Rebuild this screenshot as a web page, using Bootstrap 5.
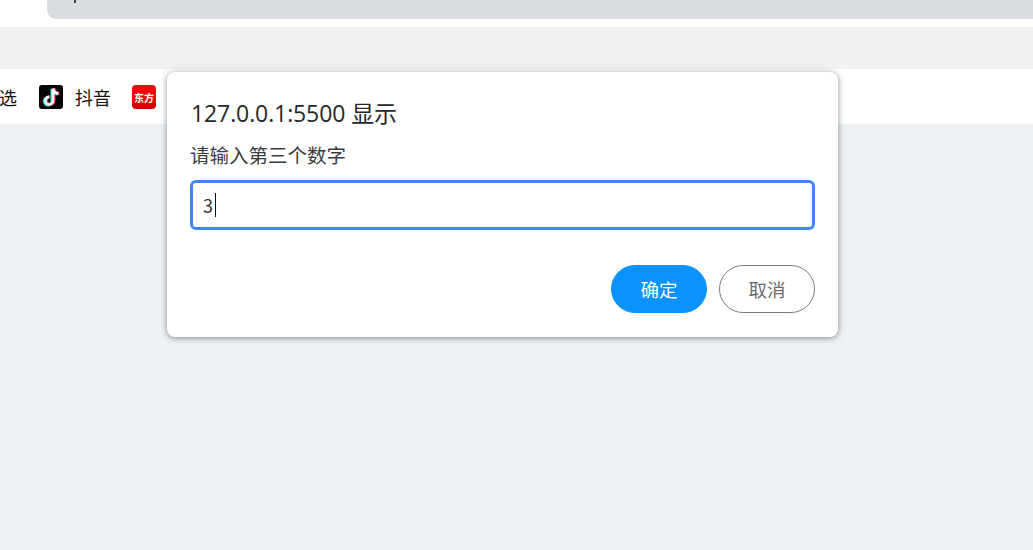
<!DOCTYPE html>
<html lang="zh">
<head>
<meta charset="utf-8">
<title>prompt</title>
<link href="https://cdn.jsdelivr.net/npm/bootstrap@5.3.0/dist/css/bootstrap.min.css" rel="stylesheet">
<style>
html,body{height:100%;}
body{background:#eff2f5;font-family:"Noto Sans CJK SC","Noto Sans",sans-serif;overflow:hidden;position:relative;}
.top-strip{height:27px;background:#fff;padding-left:47px;}
.addr-bar{height:19px;background:#d9dce1;border-bottom-left-radius:9px;padding-left:27px;}
.addr-caret{width:2px;height:3px;background:#444;}
.tool-strip{height:42px;background:#f0f1f3;}
.fav-strip{height:55px;background:#fff;color:#111;font-size:18px;overflow:hidden;padding-top:1px;}
.fav-cut{margin-left:-1px;width:20px;}
.fav-ico{width:24px;height:24px;margin-left:20px;margin-right:12px;}
.fav-label{line-height:24px;}
.ico-east{width:24px;height:24px;margin-left:21px;font-size:10px;font-weight:700;color:#fff;background:linear-gradient(#ee0a0a 55%,#c80000);border-radius:4px;letter-spacing:0;}
.dlg{position:absolute;left:167px;top:72px;width:671px;height:265px;background:#fff;border-radius:8px;box-shadow:0 1px 6px rgba(40,50,60,.55);padding:24px 23px;}
.dlg-title{font-size:23px;line-height:34px;color:#24272b;margin:0;font-weight:400;font-family:"Open Sans","Noto Sans CJK SC",sans-serif;letter-spacing:-.1px;padding-left:1px;}
.dlg-msg{font-size:19.5px;line-height:26px;color:#3a3d40;margin:12px 0 12px;}
.dlg-input{height:50px;border:3px solid #4285f4;border-radius:6px;padding:0 10px;font-size:18px;color:#333;line-height:44px;background:#fff;}
.dlg-caret{width:1px;height:24px;background:#111;margin-left:2px;}
.dlg-actions{margin-top:35px;gap:12px;}
.dlg-btn{width:96px;height:48px;font-size:18.5px;padding:0;line-height:46px;}
.dlg-ok{background:#0a93ff;border:1px solid #0a93ff;color:#fff;}
.dlg-cancel{background:#fff;border:1px solid #7d7d7d;color:#6a6a6a;}
</style>
</head>
<body>
<div class="top-strip"><div class="addr-bar"><div class="addr-caret"></div></div></div>
<div class="tool-strip"></div>
<div class="fav-strip d-flex align-items-center">
  <span class="fav-cut fav-label">选</span>
  <svg class="fav-ico flex-shrink-0" viewBox="0 0 24 24" aria-hidden="true">
    <rect width="24" height="24" rx="3" fill="#050505"/>
    <path d="M14 3.500v12.200a3.800 3.800 0 1 1-3.800-3.800M14 3.500c.4 3 2.300 4.800 5.300 5.100" fill="none" stroke="#25f4ee" stroke-width="3" transform="translate(-1 .5)"/>
    <path d="M14 3.500v12.200a3.800 3.800 0 1 1-3.800-3.800M14 3.500c.4 3 2.300 4.800 5.300 5.100" fill="none" stroke="#fe2c55" stroke-width="3" transform="translate(1 -.2)"/>
    <path d="M14 3.500v12.200a3.800 3.800 0 1 1-3.800-3.800M14 3.500c.4 3 2.300 4.800 5.300 5.100" fill="none" stroke="#fff" stroke-width="2.600"/>
  </svg>
  <span class="fav-label">抖音</span>
  <span class="ico-east d-flex align-items-center justify-content-center flex-shrink-0">东方</span>
</div>

<div class="dlg" role="dialog">
  <h1 class="dlg-title">127.0.0.1:5500 显示</h1>
  <p class="dlg-msg">请输入第三个数字</p>
  <div class="dlg-input d-flex align-items-center"><span>3</span><span class="dlg-caret"></span></div>
  <div class="dlg-actions d-flex justify-content-end">
    <button type="button" class="btn rounded-pill dlg-btn dlg-ok">确定</button>
    <button type="button" class="btn rounded-pill dlg-btn dlg-cancel">取消</button>
  </div>
</div>
<script src="https://cdn.jsdelivr.net/npm/bootstrap@5.3.0/dist/js/bootstrap.bundle.min.js"></script>
</body>
</html>
